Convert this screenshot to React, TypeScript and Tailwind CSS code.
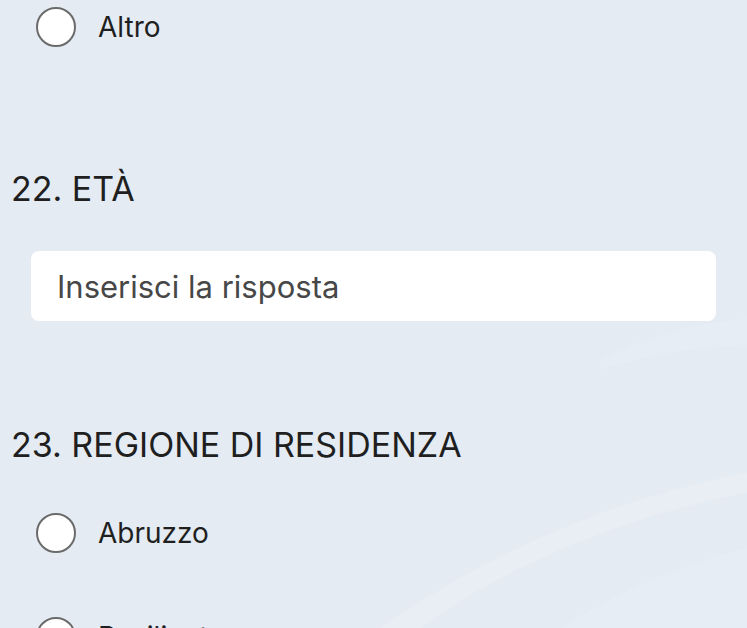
import React from "react";

const font = { fontFamily: "Inter, Roboto, 'Noto Sans', sans-serif" };

function Radio({ label }: { label: string }) {
  return (
    <div className="flex h-[54px] items-center pl-[36px]">
      <div className="h-[40px] w-[40px] rounded-full border-2 border-[#6b6b6b] bg-white" />
      <span className="ml-[22px] text-[28px] leading-none text-[#1f1f1f]">{label}</span>
    </div>
  );
}

export default function App() {
  return (
    <div className="relative h-[628px] w-[747px] overflow-hidden bg-[#e4ebf3]" style={font}>
      <svg className="pointer-events-none absolute inset-0" width="747" height="628" viewBox="0 0 747 628">
        <path d="M380 628 C 480 560, 600 500, 760 470 L 760 490 C 620 515, 500 570, 420 628 Z" fill="#ffffff" opacity="0.18" />
        <path d="M560 628 C 620 590, 690 560, 760 545 L 760 628 Z" fill="#ffffff" opacity="0.1" />
        <path d="M600 360 C 660 330, 710 320, 760 318 L 760 345 C 710 345, 660 352, 600 370 Z" fill="#ffffff" opacity="0.1" />
      </svg>
      <div className="relative flex flex-col">
        <Radio label="Altro" />
        <div className="mt-[115px] pl-[11px] text-[34px] leading-[40px] text-[#1f1f1f]">22. ETÀ</div>
        <div className="mx-[31px] mt-[42px] flex h-[70px] items-center rounded-[8px] bg-white pl-[26px]">
          <span className="text-[31px] leading-none text-[#474747]">Inserisci la risposta</span>
        </div>
        <div className="mt-[104px] pl-[11px] text-[34px] leading-[40px] text-[#1f1f1f]">23. REGIONE DI RESIDENZA</div>
        <div className="mt-[41px]">
          <Radio label="Abruzzo" />
        </div>
        <div className="mt-[50px]">
          <Radio label="Basilicata" />
        </div>
      </div>
    </div>
  );
}
